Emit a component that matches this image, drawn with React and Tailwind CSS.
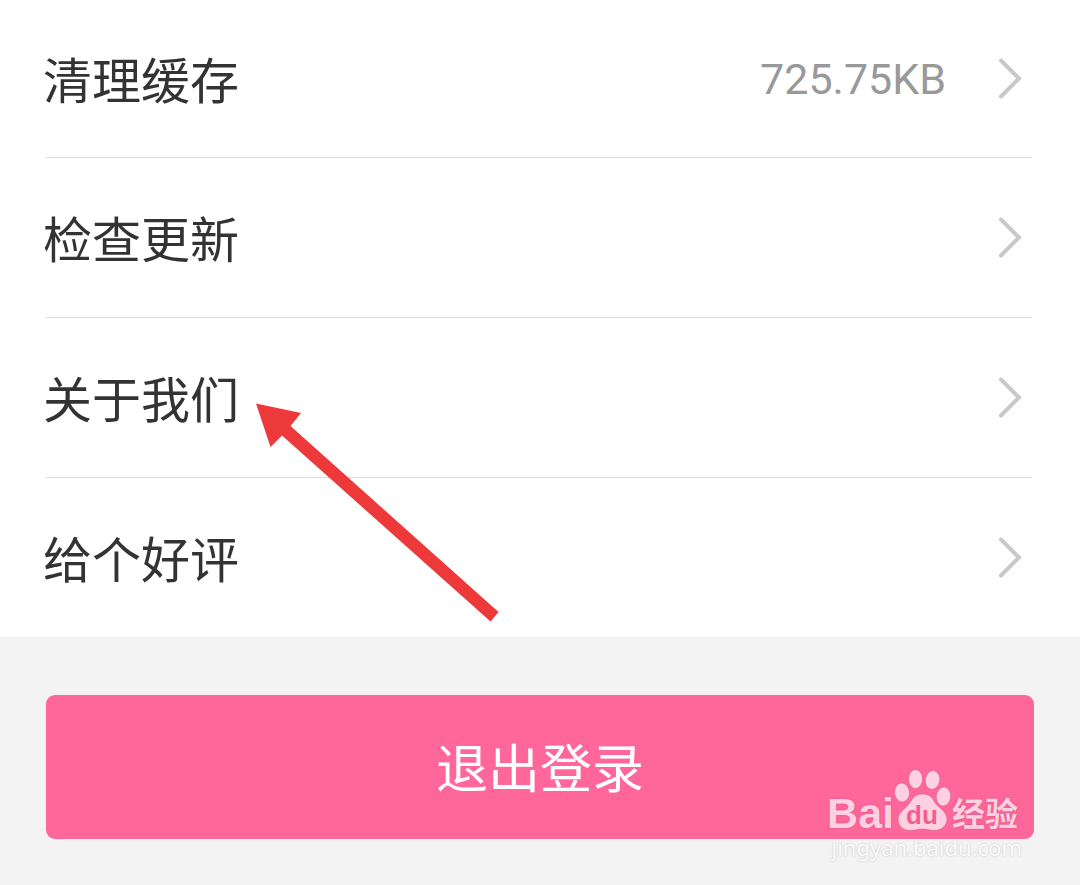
import React from "react";

const rows = [
  { label: "清理缓存", value: "725.75KB" },
  { label: "检查更新" },
  { label: "关于我们", marked: true },
  { label: "给个好评" },
];

function Chevron() {
  return (
    <svg className="mr-2.5 h-11 w-7 shrink-0" viewBox="0 0 28 44" fill="none" aria-hidden="true">
      <path d="M7 3.500 L25 21.500 L7 39.500" stroke="#c9c9c9" strokeWidth="4" strokeLinecap="round" />
    </svg>
  );
}

function Arrow() {
  return (
    <svg
      className="pointer-events-none absolute top-20 left-52 z-10 h-56 w-64"
      viewBox="254 398 256 224"
      fill="#ee393a"
      aria-hidden="true"
    >
      <path d="M256 403.5 L301 413 L290.5 426 L498.5 612 L490.5 621.5 L282 435.5 L270.5 447 Z" />
    </svg>
  );
}

function Row({ label, value, marked }) {
  return (
    <li className="relative h-40 border-b border-[#dadada] first:h-[158px] last:h-[159px] last:border-b-0">
      <button type="button" className="flex h-full w-full items-center text-left">
        <span className="-ml-[3px] flex-1 pt-2 text-[49px] leading-none text-[#333333]">{label}</span>
        {value && <span className="mr-12 pt-0.5 text-[43px] leading-none text-[#999999]">{value}</span>}
        <Chevron />
      </button>
      {marked && <Arrow />}
    </li>
  );
}

function Paw() {
  return (
    <svg className="mb-0.5 h-[62px] w-[58px] shrink-0" viewBox="0 0 58 62" aria-hidden="true">
      <g fill="#ffd0e1" stroke="#d65b87" strokeOpacity="0.6">
        <ellipse cx="8" cy="23.5" rx="7.500" ry="9.500" transform="rotate(-6 8 23.5)" />
        <ellipse cx="21.5" cy="10" rx="7" ry="9.500" />
        <ellipse cx="38.5" cy="11" rx="7.300" ry="9.500" transform="rotate(10 38.5 11)" />
        <ellipse cx="49.5" cy="27.5" rx="7.300" ry="9.500" transform="rotate(5 49.5 27.5)" />
        <path d="M28.500 25 C35 25 38 28 40 32 C43 38 53 42 53 50 C53 57 47 61.500 40 61.500 C36 61.500 33 60 28.500 60 C24 60 21 61.500 16 61.500 C9 61.500 4 57 4 50 C4 43 13 39 17 32 C20 27 23 25 28.500 25 Z" />
      </g>
      <text
        className="font-['Liberation_Sans',Arial,sans-serif] text-[26px] font-bold [text-shadow:none]"
        x="28"
        y="55"
        textAnchor="middle"
        fill="#f0608f"
      >
        du
      </text>
    </svg>
  );
}

function Watermark() {
  return (
    <div className="pointer-events-none absolute right-[58px] bottom-6 flex flex-col items-end">
      <div className="flex items-end text-[#ffd0e1] [text-shadow:0_0_2px_#c9507c]">
        <span className="font-['Liberation_Sans',Arial,sans-serif] text-[43px] leading-10 font-bold">Bai</span>
        <Paw />
        <span className="mr-1 text-[33px] leading-9 font-bold">经验</span>
      </div>
      <span className="font-['Noto_Sans',sans-serif] text-[22px] leading-7 text-[#fbfbfb] [text-shadow:0_0_2px_#bdbdbd]">
        jingyan.baidu.com
      </span>
    </div>
  );
}

export default function App() {
  return (
    <main className="relative min-h-screen bg-[#f3f3f3] font-['Roboto','Noto_Sans_CJK_SC',sans-serif]">
      <ul className="bg-white pr-12 pl-[46px]">
        {rows.map((row) => (
          <Row key={row.label} {...row} />
        ))}
      </ul>
      <div className="relative px-[46px] pt-[58px] pb-[46px]">
        <button type="button" className="h-36 w-full rounded-[9px] bg-[#ff6699] pt-2 text-[52px] leading-none text-white">
          退出登录
        </button>
        <Watermark />
      </div>
    </main>
  );
}
